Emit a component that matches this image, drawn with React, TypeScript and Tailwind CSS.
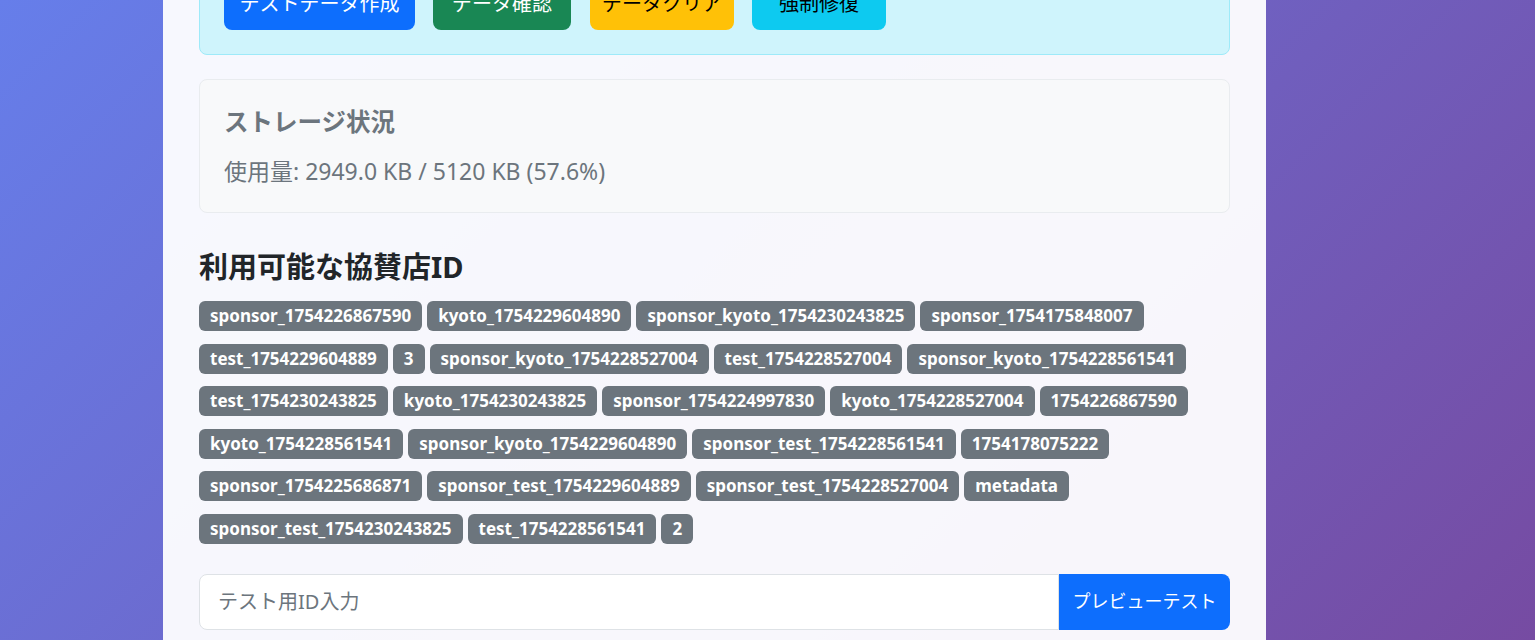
import React, { useState } from 'react';

const sponsorIds = [
  'sponsor_1754226867590',
  'kyoto_1754229604890',
  'sponsor_kyoto_1754230243825',
  'sponsor_1754175848007',
  'test_1754229604889',
  '3',
  'sponsor_kyoto_1754228527004',
  'test_1754228527004',
  'sponsor_kyoto_1754228561541',
  'test_1754230243825',
  'kyoto_1754230243825',
  'sponsor_1754224997830',
  'kyoto_1754228527004',
  '1754226867590',
  'kyoto_1754228561541',
  'sponsor_kyoto_1754229604890',
  'sponsor_test_1754228561541',
  '1754178075222',
  'sponsor_1754225686871',
  'sponsor_test_1754229604889',
  'sponsor_test_1754228527004',
  'metadata',
  'sponsor_test_1754230243825',
  'test_1754228561541',
  '2',
];

// debug panel is scrolled half out of view at the top
const DebugTools: React.FC = () => (
  <div className="-mt-[23px] shrink-0 rounded-lg border border-[#9eeaf9] bg-[#cff4fc] px-6 pb-6">
    <div className="flex items-center">
      <button className="h-[52px] w-[191px] rounded-lg bg-[#0d6efd] text-[20px] text-white">
        テストデータ作成
      </button>
      <button className="ml-[18px] h-[52px] w-[138px] rounded-lg bg-[#198754] text-[20px] text-white">
        データ確認
      </button>
      <button className="ml-[19px] h-[52px] w-[144px] rounded-lg bg-[#ffc107] text-[20px] text-black">
        データクリア
      </button>
      <button className="ml-[18px] h-[52px] w-[134px] rounded-lg bg-[#0dcaf0] text-[20px] text-black">
        強制修復
      </button>
    </div>
  </div>
);

const StorageStatus: React.FC = () => (
  <div className="mt-[24px] h-[134px] shrink-0 rounded-lg border border-[#e9ecef] bg-[#f8f9fa] px-6 pt-[26px]">
    <h5 className="text-[24.5px] font-bold leading-[32px] text-[#6c757d]">ストレージ状況</h5>
    <p className="mt-[18px] text-[23px] leading-[30px] text-[#6c757d]">
      使用量: 2949.0 KB / 5120 KB (57.6%)
    </p>
  </div>
);

export default function App() {
  const [testId, setTestId] = useState('');

  return (
    <div className="h-screen overflow-hidden bg-[linear-gradient(135deg,#667eea_0%,#764ba2_100%)] font-['Noto_Sans','Noto_Sans_CJK_JP',sans-serif]">
      <div className="ml-[163px] flex h-full w-[1103px] flex-col bg-white/95 px-9">
        <DebugTools />
        <StorageStatus />

        <h4 className="mt-[34px] text-[29px] font-bold leading-[40px] text-[#212529]">
          利用可能な協賛店ID
        </h4>
        <div className="mt-[14px] flex flex-wrap gap-x-[5px] gap-y-[12.5px]">
          {sponsorIds.map((id) => (
            <span
              key={id}
              className="flex h-[30px] items-center rounded-md bg-[#6c757d] px-[11px] text-[17px] font-bold text-white"
            >
              {id}
            </span>
          ))}
        </div>

        <div className="mt-[30px] flex h-[56px] shrink-0">
          <input
            value={testId}
            onChange={(e) => setTestId(e.target.value)}
            placeholder="テスト用ID入力"
            className="min-w-0 flex-1 rounded-l-lg border border-[#dee2e6] bg-white px-[18px] text-[20px] text-[#212529] outline-none placeholder:text-[#6c757d]"
          />
          <button className="w-[171px] rounded-r-lg bg-[#0d6efd] text-[18px] text-white">
            プレビューテスト
          </button>
        </div>
      </div>
    </div>
  );
}
